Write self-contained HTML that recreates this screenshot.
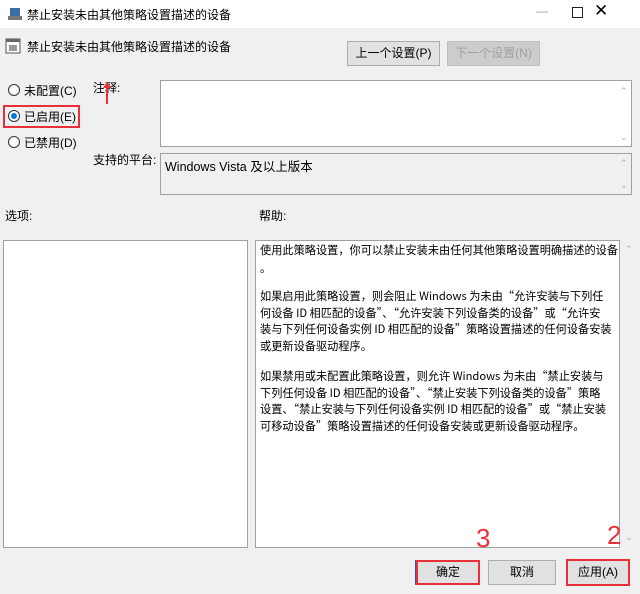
<!DOCTYPE html>
<html><head><meta charset="utf-8"><style>
*{margin:0;padding:0;box-sizing:border-box}
body{width:640px;height:594px;background:#f0f0f0;position:relative;overflow:hidden;font-family:"Liberation Sans","Noto Sans CJK SC",sans-serif;font-size:12px;color:#000}
.a{position:absolute;white-space:nowrap}
.btn{position:absolute;background:#e1e1e1;border:1px solid #adadad;text-align:center;font-size:12px}
.box{position:absolute;border:1px solid #a0a0a0;background:#fff}
.red{position:absolute;border:2px solid #e8303a}
.rad{position:absolute;width:12px;height:12px;border:1px solid #333;border-radius:50%;background:#fff}
.num{position:absolute;color:#e8303a;font-size:26px;font-family:"Liberation Sans",sans-serif}
.sc{position:absolute;color:#aaa;font-size:9px}
.h{position:absolute;left:260px;white-space:nowrap;font-family:"Noto Sans CJK SC",sans-serif;font-size:11.2px;line-height:16.7px}
</style></head><body>
<div class="a" style="left:0;top:0;width:640px;height:28px;background:#fff"></div>
<svg class="a" style="left:7px;top:6px" width="16" height="16"><rect x="3" y="2" width="10" height="8" fill="#3a6ea5"/><rect x="1" y="10" width="14" height="4" fill="#777"/></svg>
<div class="a" style="left:27px;top:6px;font-size:12px">禁止安装未由其他策略设置描述的设备</div>
<div class="a" style="left:536px;top:4px;color:#999">—</div>
<div class="a" style="left:572px;top:7px;width:11px;height:11px;border:1px solid #222"></div>
<div class="a" style="left:594px;top:1px;font-size:17px">✕</div>
<svg class="a" style="left:5px;top:38px" width="16" height="16"><rect x="1" y="1" width="14" height="14" fill="#fff" stroke="#555"/><rect x="1" y="1" width="14" height="3" fill="#666"/><rect x="4" y="7" width="8" height="6" fill="#999"/></svg>
<div class="a" style="left:27px;top:38px">禁止安装未由其他策略设置描述的设备</div>
<div class="btn" style="left:347px;top:41px;width:93px;height:25px;line-height:23px">上一个设置(P)</div>
<div class="btn" style="left:447px;top:41px;width:93px;height:25px;line-height:23px;color:#a0a0a0;background:#ccc;border-color:#bfbfbf">下一个设置(N)</div>
<div class="rad" style="left:8px;top:84px"></div><div class="a" style="left:24px;top:82px">未配置(C)</div>
<div class="rad" style="left:8px;top:110px"></div><div class="a" style="left:11px;top:113px;width:6px;height:6px;border-radius:50%;background:#0078d7"></div><div class="a" style="left:24px;top:108px">已启用(E)</div>
<div class="rad" style="left:8px;top:136px"></div><div class="a" style="left:24px;top:134px">已禁用(D)</div>
<div class="red" style="left:3px;top:105px;width:77px;height:23px"></div>
<div class="a" style="left:93px;top:79px">注释:</div>
<div class="a" style="left:106px;top:84px;width:2px;height:20px;background:#e8303a"></div>
<div class="a" style="left:103px;top:82px;width:0;height:0;border-left:4px solid transparent;border-right:4px solid transparent;border-bottom:6px solid #e8303a"></div>
<div class="box" style="left:160px;top:80px;width:472px;height:67px"></div>
<div class="sc" style="left:620px;top:86px">⌃</div><div class="sc" style="left:620px;top:132px">⌄</div>
<div class="a" style="left:93px;top:151px">支持的平台:</div>
<div class="box" style="left:160px;top:153px;width:472px;height:42px;background:#f0f0f0"></div>
<div class="a" style="left:165px;top:156px;font-size:12.5px">Windows Vista 及以上版本</div>
<div class="sc" style="left:620px;top:158px">⌃</div><div class="sc" style="left:620px;top:180px">⌄</div>
<div class="a" style="left:5px;top:207px">选项:</div>
<div class="a" style="left:259px;top:207px">帮助:</div>
<div class="box" style="left:3px;top:240px;width:245px;height:308px"></div>
<div class="box" style="left:255px;top:240px;width:365px;height:308px"></div>
<div class="h" style="top:241px;line-height:18px">使用此策略设置，你可以禁止安装未由任何其他策略设置明确描述的设备<br>。</div>
<div class="h" style="top:288px">如果启用此策略设置，则会阻止 Windows 为未由“允许安装与下列任<br>何设备 ID 相匹配的设备”、“允许安装下列设备类的设备”或“允许安<br>装与下列任何设备实例 ID 相匹配的设备”策略设置描述的任何设备安装<br>或更新设备驱动程序。</div>
<div class="h" style="top:368px">如果禁用或未配置此策略设置，则允许 Windows 为未由“禁止安装与<br>下列任何设备 ID 相匹配的设备”、“禁止安装下列设备类的设备”策略<br>设置、“禁止安装与下列任何设备实例 ID 相匹配的设备”或“禁止安装<br>可移动设备”策略设置描述的任何设备安装或更新设备驱动程序。</div>
<div class="sc" style="left:625px;top:244px">⌃</div><div class="sc" style="left:625px;top:532px">⌄</div>
<div class="btn" style="left:415px;top:560px;width:65px;height:25px;line-height:23px;border-left:2px solid #3050c0">确定</div>
<div class="btn" style="left:488px;top:560px;width:68px;height:25px;line-height:23px">取消</div>
<div class="btn" style="left:566px;top:560px;width:64px;height:25px;line-height:23px">应用(A)</div>
<div class="red" style="left:416px;top:560px;width:64px;height:25px"></div>
<div class="red" style="left:566px;top:559px;width:64px;height:27px"></div>
<div class="num" style="left:476px;top:523px">3</div>
<div class="num" style="left:607px;top:520px">2</div>
</body></html>
